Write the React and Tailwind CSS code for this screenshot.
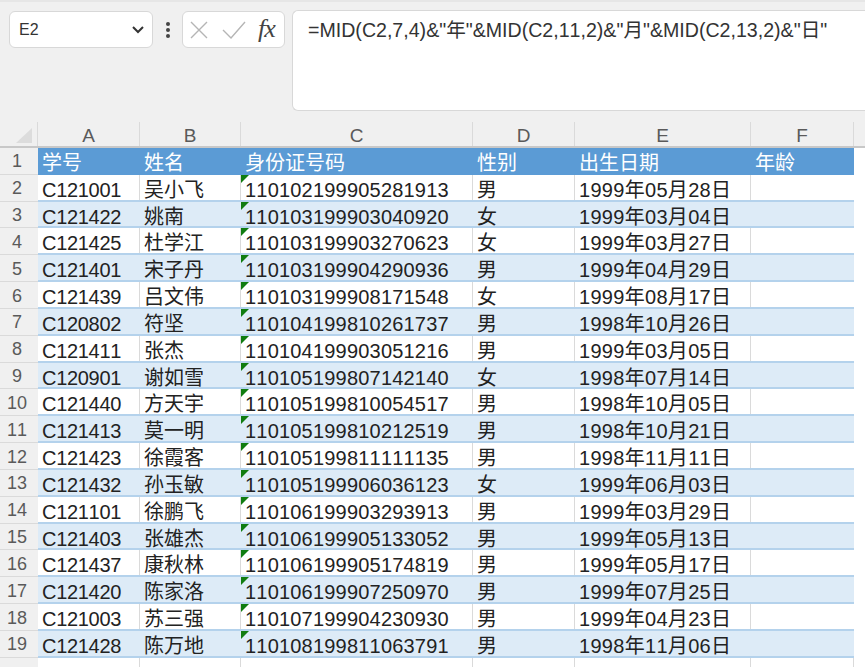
const rows = [
["C121001","吴小飞","110102199905281913","男","1999年05月28日"],
["C121422","姚南","110103199903040920","女","1999年03月04日"],
["C121425","杜学江","110103199903270623","女","1999年03月27日"],
["C121401","宋子丹","110103199904290936","男","1999年04月29日"],
["C121439","吕文伟","110103199908171548","女","1999年08月17日"],
["C120802","符坚","110104199810261737","男","1998年10月26日"],
["C121411","张杰","110104199903051216","男","1999年03月05日"],
["C120901","谢如雪","110105199807142140","女","1998年07月14日"],
["C121440","方天宇","110105199810054517","男","1998年10月05日"],
["C121413","莫一明","110105199810212519","男","1998年10月21日"],
["C121423","徐霞客","110105199811111135","男","1998年11月11日"],
["C121432","孙玉敏","110105199906036123","女","1999年06月03日"],
["C121101","徐鹏飞","110106199903293913","男","1999年03月29日"],
["C121403","张雄杰","110106199905133052","男","1999年05月13日"],
["C121437","康秋林","110106199905174819","男","1999年05月17日"],
["C121420","陈家洛","110106199907250970","男","1999年07月25日"],
["C121003","苏三强","110107199904230930","男","1999年04月23日"],
["C121428","陈万地","110108199811063791","男","1998年11月06日"],
];
const cols = ["w-[102px]","w-[101px]","w-[232px]","w-[102px]","w-[176px]","w-[103px]"];
const track = ["tracking-[-0.3px]","","tracking-[0.2px]","","tracking-[0.3px]",""];
const letters = ["A","B","C","D","E","F"];
const head = ["学号","姓名","身份证号码","性别","出生日期","年龄"];
const font = { fontFamily: '"Liberation Sans","Noto Sans CJK SC",sans-serif' };

function RowNum({ n }) {
  return <div className="w-[38px] shrink-0 h-full bg-[#f0f0f0] border-b border-[#dadada] flex items-center justify-center pr-[4px] pt-[2px] text-[18px] text-[#5a5a5a]">{n}</div>;
}

export default function App() {
  return (
    <div className="w-[865px] h-[667px] overflow-hidden bg-white flex flex-col [font-kerning:none]" style={font}>
      <div className="h-[122px] shrink-0 bg-[#f0f0f0] border-t-2 border-[#e6e6e6] flex items-start pt-[8px] pl-[9px]">
        <div className="mt-[1px] w-[144px] h-[37px] bg-white border border-[#d8d8d8] rounded-[6px] flex items-center justify-between pl-[9px] pr-[7px] text-[16px] text-[#333]">
          <span>E2</span>
          <svg width="14" height="10" viewBox="0 0 14 10" fill="none" stroke="#333" strokeWidth="2"><path d="M2 2l5 5 5-5" /></svg>
        </div>
        <div className="mt-[1px] w-[29px] h-[37px] flex flex-col items-center justify-center gap-[2px]">
          <span className="w-[4px] h-[4px] bg-[#444] rounded-full"></span>
          <span className="w-[4px] h-[4px] bg-[#444] rounded-full"></span>
          <span className="w-[4px] h-[4px] bg-[#444] rounded-full"></span>
        </div>
        <div className="mt-[1px] w-[103px] h-[37px] bg-white border border-[#d8d8d8] rounded-[6px] flex items-center pl-[7px]">
          <svg width="18" height="18" viewBox="0 0 18 18" fill="none" stroke="#b5b5b5" strokeWidth="1.4"><path d="M1 1l16 16M17 1L1 17" /></svg>
          <svg className="ml-[14px]" width="24" height="18" viewBox="0 0 24 18" fill="none" stroke="#b5b5b5" strokeWidth="1.4"><path d="M1 9l8 8L23 1" /></svg>
          <span className="ml-[12px] text-[26px] italic text-[#444] leading-none tracking-[-1px] pb-[2px]" style={{ fontFamily: '"Liberation Serif",serif' }}>fx</span>
        </div>
        <div className="ml-[7px] flex-1 h-[101px] bg-white border border-[#d8d8d8] border-r-0 rounded-l-[6px] pl-[15px] pt-[5px] text-[19.6px] leading-[28px] text-[#333] whitespace-nowrap">
          =MID(C2,7,4)&amp;"年"&amp;MID(C2,11,2)&amp;"月"&amp;MID(C2,13,2)&amp;"日"
        </div>
      </div>
      <div className="h-[26px] shrink-0 flex bg-[#f0f0f0] border-b-2 border-[#c8c8c8]">
        <div className="w-[38px] shrink-0 relative border-r border-[#dadada]">
          <div className="absolute right-[5px] bottom-[3px] w-0 h-0 border-l-[16px] border-l-transparent border-b-[15px] border-b-[#dcdcdc]"></div>
        </div>
        {letters.map((l, i) => (
          <div key={l} className={`${cols[i]} shrink-0 border-r border-[#dadada] flex items-center justify-center text-[19px] text-[#5a5a5a] pt-[4px]`}>{l}</div>
        ))}
      </div>
      <div className="h-[26.84px] shrink-0 flex">
        <RowNum n={1} />
        <div className="flex bg-[#5b9bd5]">
          {head.map((h, i) => (
            <div key={h} className={`${cols[i]} shrink-0 flex items-center pl-[4px] pt-[4px] text-[20px] text-white`}>{h}</div>
          ))}
        </div>
      </div>
      {rows.map((r, ri) => (
        <div key={r[0]} className="h-[26.84px] shrink-0 flex">
          <RowNum n={ri + 2} />
          <div className={`flex border-b-2 border-[#b4d2ec] ${ri % 2 ? "bg-[#ddebf7]" : "bg-white"}`}>
            {[...r, ""].map((c, i) => (
              <div key={i} className={`${cols[i]} shrink-0 relative flex items-center pl-[4px] pt-[5px] text-[20px] text-[#222] whitespace-nowrap ${track[i]} ${ri % 2 || i === 5 ? "" : "border-r border-[#dadada]"}`}>
                {i === 2 && <div className="absolute left-0 top-0 w-0 h-0 border-t-[8px] border-t-[#107c10] border-r-[8px] border-r-transparent"></div>}
                {c}
              </div>
            ))}
          </div>
        </div>
      ))}
      <div className="flex-1 flex">
        <div className="w-[38px] bg-[#f0f0f0]"></div>
        {cols.map((c, i) => <div key={i} className={`${c} border-r border-[#dadada]`}></div>)}
      </div>
    </div>
  );
}
